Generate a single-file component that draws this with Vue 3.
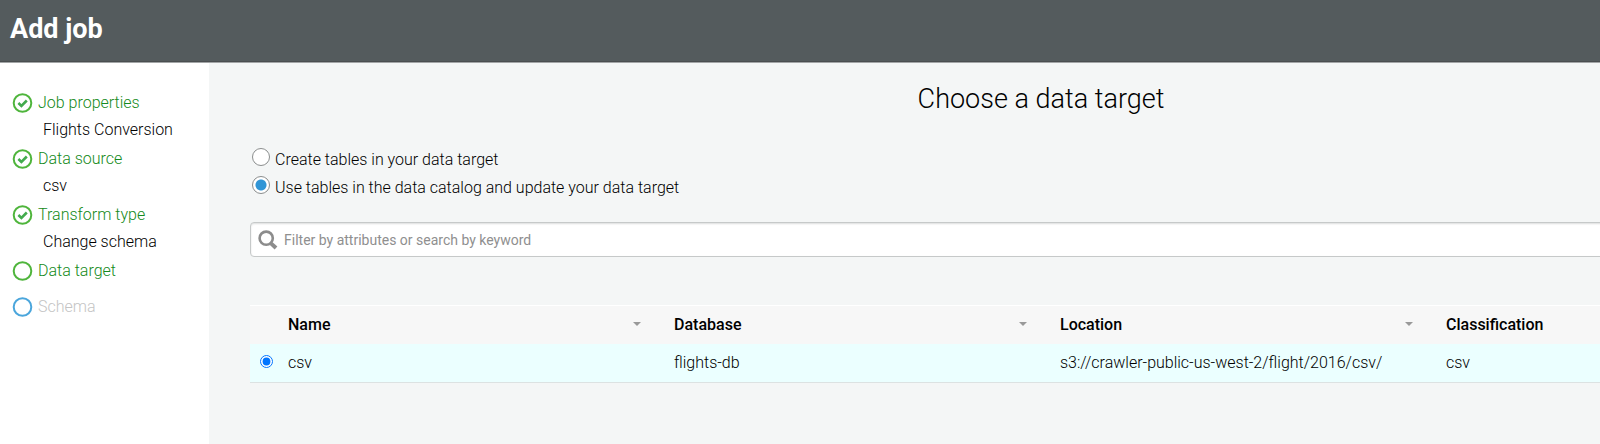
<script setup>
import { ref } from 'vue'

const steps = [
  { label: 'Job properties', value: 'Flights Conversion', state: 'done' },
  { label: 'Data source', value: 'csv', state: 'done' },
  { label: 'Transform type', value: 'Change schema', state: 'done' },
  { label: 'Data target', state: 'current' },
  { label: 'Schema', state: 'pending' }
]
const options = [
  { id: 'create', label: 'Create tables in your data target' },
  { id: 'catalog', label: 'Use tables in the data catalog and update your data target' }
]
const columns = ['Name', 'Database', 'Location', 'Classification']
const rows = [['csv', 'flights-db', 's3://crawler-public-us-west-2/flight/2016/csv/', 'csv']]

const mode = ref('catalog')
const selected = ref(0)
const filter = ref('')
</script>

<template>
  <div class="page">
    <header class="topbar"><h1>Add job</h1></header>
    <div class="body">
      <nav class="sidebar" aria-label="Steps">
        <ol>
          <li v-for="s in steps" :key="s.label" :class="s.state">
            <a href="#" class="step">
              <svg class="mark" viewBox="0 0 20 20" aria-hidden="true">
                <circle cx="10" cy="10" r="8.8" />
                <path v-if="s.state === 'done'" d="M5.9 10l3 2.9 5.4-5.4" />
              </svg>
              <span>{{ s.label }}</span>
            </a>
            <div v-if="s.value" class="value">{{ s.value }}</div>
          </li>
        </ol>
      </nav>
      <main class="main">
        <div class="content">
          <h2>Choose a data target</h2>
          <div class="options">
            <label v-for="o in options" :key="o.id">
              <input v-model="mode" type="radio" name="mode" :value="o.id" class="big-radio" />
              <span>{{ o.label }}</span>
            </label>
          </div>
          <div class="search">
            <svg viewBox="0 0 20 20" aria-hidden="true">
              <circle cx="8.2" cy="8.2" r="6.6" />
              <path d="M13 13.4l5 4.6" />
            </svg>
            <input v-model="filter" type="text" aria-label="Filter" placeholder="Filter by attributes or search by keyword" />
          </div>
          <table>
            <colgroup>
              <col class="pick" />
              <col v-for="c in columns" :key="c" />
            </colgroup>
            <thead>
              <tr>
                <th></th>
                <th v-for="c in columns" :key="c" scope="col">
                  <button type="button">
                    <span>{{ c }}</span>
                    <svg viewBox="0 0 8 4" aria-hidden="true"><path d="M0 0h8L4 4z" /></svg>
                  </button>
                </th>
              </tr>
            </thead>
            <tbody>
              <tr v-for="(r, i) in rows" :key="i">
                <td>
                  <input v-model="selected" type="radio" name="table" :value="i" :aria-label="r[0]" class="small-radio" />
                </td>
                <td v-for="(v, j) in r" :key="j">{{ v }}</td>
              </tr>
            </tbody>
          </table>
        </div>
      </main>
    </div>
  </div>
</template>

<style>
body {
  margin: 0;
}
</style>

<style scoped>
.page {
  display: flex;
  flex-direction: column;
  min-height: 100vh;
  font-family: Roboto, "Liberation Sans", sans-serif;
  font-size: 16px;
  font-weight: 300;
  color: #000;
}
.topbar {
  height: 62px;
  box-sizing: border-box;
  padding: 0 10px 3px;
  display: flex;
  align-items: center;
  background: #545b5d;
  border-bottom: 1px solid #4a4e50;
}
h1 {
  margin: 0;
  font-size: 27px;
  line-height: 32px;
  font-weight: 700;
  color: #fff;
}
.body {
  flex: 1;
  display: flex;
  border-top: 1px solid #a2a5a6;
}
.sidebar {
  flex: none;
  width: 209px;
  box-sizing: border-box;
  padding: 25px 12px;
  background: #fff;
}
ol {
  list-style: none;
  margin: 0;
  padding: 0;
}
.step {
  display: flex;
  align-items: center;
  gap: 5px;
  height: 28px;
  color: #148a20;
  text-decoration: none;
}
.mark {
  width: 21px;
  height: 20px;
  padding-top: 2px;
  fill: none;
  stroke: #4fb53c;
  stroke-width: 2;
}
.mark path {
  stroke: #42ab4d;
  stroke-width: 2.6;
}
.value {
  padding-left: 31px;
  line-height: 28px;
}
.pending {
  margin-top: 8px;
}
.pending .step {
  color: #c4c4c4;
}
.pending .mark {
  stroke: #4ba6dc;
}
.main {
  flex: 1;
  min-width: 0;
  overflow: hidden;
  padding-left: 41px;
  background: #f4f6f6;
}
.content {
  min-width: 1582px;
}
h2 {
  margin: 0;
  padding: 20px 0 30px;
  text-align: center;
  font-size: 27px;
  line-height: 32px;
  font-weight: 300;
}
.options label {
  display: flex;
  align-items: center;
  gap: 5px;
  height: 28px;
}
.big-radio {
  appearance: none;
  box-sizing: border-box;
  width: 18px;
  height: 18px;
  margin: 0 0 4px 2px;
  border: 1px solid #8b8e8e;
  border-radius: 50%;
  background: #fff;
}
.big-radio:checked {
  background: radial-gradient(circle, #3095d6 5px, #fff 6px);
}
.search {
  display: flex;
  align-items: center;
  gap: 6px;
  height: 35px;
  box-sizing: border-box;
  margin-top: 21px;
  padding: 0 7px;
  border: 1px solid #c6c9c9;
  border-radius: 4px;
  background: #fff;
  box-shadow: inset 0 1px 2px #dcdede;
}
.search svg {
  width: 20px;
  height: 20px;
  fill: none;
  stroke: #8c8c8c;
  stroke-width: 2.6;
}
.search path {
  stroke-width: 4;
}
.search input {
  flex: 1;
  border: 0;
  padding: 0;
  outline: 0;
  background: none;
  font: inherit;
  font-size: 14px;
  font-weight: 400;
}
.search input::placeholder {
  color: #8f8f8f;
}
table {
  width: 100%;
  margin-top: 48px;
  table-layout: fixed;
  border-collapse: separate;
  border-spacing: 0;
}
.pick {
  width: 38px;
}
th,
td {
  box-sizing: border-box;
  height: 39px;
  padding: 0 0 2px;
  text-align: left;
}
th {
  background: #f7f7f7;
  border-top: 1px solid #fff;
}
td {
  background: #ebffff;
  border-bottom: 1px solid #dce2e2;
}
th button {
  display: flex;
  align-items: center;
  justify-content: space-between;
  width: 100%;
  padding: 0 33px 0 0;
  border: 0;
  background: none;
  font: inherit;
  font-weight: 500;
  color: #000;
}
th svg {
  width: 8px;
  height: 4px;
  fill: #999;
}
.small-radio {
  display: block;
  width: 13px;
  height: 13px;
  margin: 0 0 2px 10px;
  accent-color: #0075ff;
}
</style>
